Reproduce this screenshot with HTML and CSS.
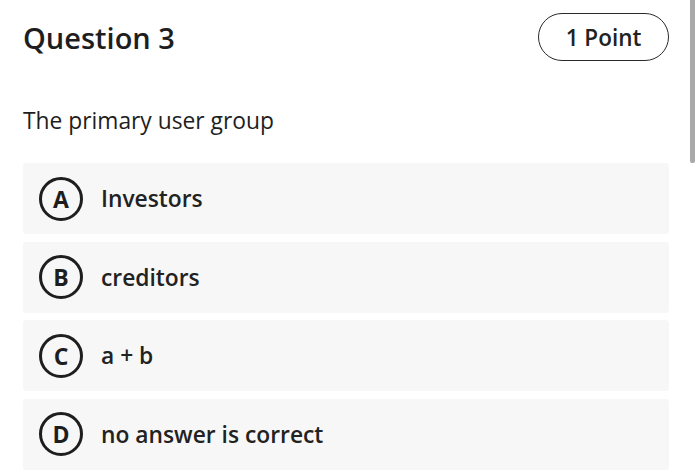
FILE: index.html
```html
<!DOCTYPE html>
<html>
<head>
<meta charset="utf-8">
<link rel="stylesheet" href="styles.css">
</head>
<body>
<div class="page">
  <div class="header">
    <h1 class="title">Question 3</h1>
    <div class="points">1 Point</div>
  </div>
  <p class="prompt">The primary user group</p>
  <div class="options">
    <div class="option"><span class="letter">A</span><span class="label">Investors</span></div>
    <div class="option"><span class="letter">B</span><span class="label">creditors</span></div>
    <div class="option"><span class="letter">C</span><span class="label">a + b</span></div>
    <div class="option"><span class="letter">D</span><span class="label">no answer is correct</span></div>
  </div>
</div>
<div class="scrollbar"></div>
</body>
</html>
```
FILE: styles.css
```css
html, body {
  margin: 0;
  padding: 0;
  background: #fff;
  width: 700px;
  height: 472px;
  overflow: hidden;
}
body {
  font-family: "Open Sans", "Noto Sans", sans-serif;
  color: #1e1e1e;
  position: relative;
}
.page {
  padding: 13px 31px 0 23px;
}
.header {
  display: flex;
  justify-content: space-between;
  align-items: center;
  height: 48px;
}
.title {
  margin: 0;
  font-size: 29px;
  font-weight: 600;
  letter-spacing: 0;
}
.points {
  box-sizing: border-box;
  width: 131px;
  height: 48px;
  border: 1.5px solid #2a2a2a;
  border-radius: 24px;
  display: flex;
  align-items: center;
  justify-content: center;
  font-size: 22.5px;
  font-weight: 600;
  color: #222;
}
.prompt {
  margin: 44px 0 0 0;
  font-size: 22.8px;
  line-height: 32px;
  font-weight: 400;
}
.options {
  margin-top: 26px;
  display: flex;
  flex-direction: column;
  gap: 7.5px;
}
.option {
  height: 71px;
  background: #f7f7f7;
  border-radius: 3px;
  display: flex;
  align-items: center;
  padding-left: 16px;
}
.letter {
  box-sizing: border-box;
  width: 44px;
  height: 44px;
  border: 3px solid #1e1e1e;
  border-radius: 50%;
  display: flex;
  align-items: center;
  justify-content: center;
  font-size: 23px;
  font-weight: 700;
  flex-shrink: 0;
}
.label {
  margin-left: 18px;
  font-size: 22.8px;
  font-weight: 600;
  color: #222;
}
.scrollbar {
  position: absolute;
  left: 690px;
  top: 0;
  width: 5px;
  height: 163px;
  background: #a9a9a9;
  border-radius: 0 0 2px 2px;
}
```
